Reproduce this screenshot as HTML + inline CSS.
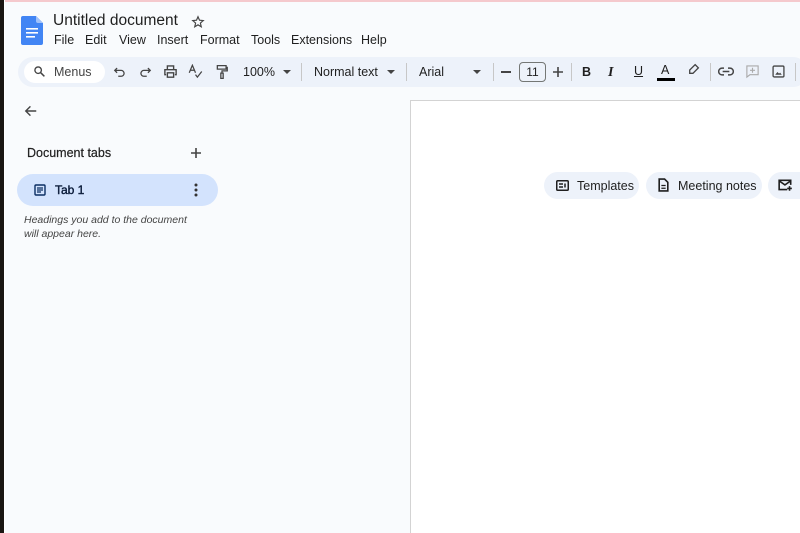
<!DOCTYPE html>
<html><head><meta charset="utf-8"><style>
*{margin:0;padding:0;box-sizing:border-box}
html{width:800px;height:533px;overflow:hidden}
body{width:800px;height:533px;overflow:hidden;background:#f9fbfd;font-family:"Liberation Sans",Arial,sans-serif;color:#1f1f1f;position:relative}
.abs{position:absolute}
svg{display:block}
.menu span{position:absolute;top:33px;font-size:12.5px;color:#1f1f1f}
.tb{position:absolute;top:57px;left:18px;width:790px;height:30px;background:#edf2fa;border-radius:16px}
.ic{position:absolute;top:64px}
.sep{position:absolute;top:63px;width:1px;height:18px;background:#c7c7c7}
.t{position:absolute;font-size:12.5px;color:#1f1f1f}
.chip{position:absolute;top:172px;height:27px;background:#edf2fa;border-radius:14px;font-size:12.5px;color:#1f1f1f}
</style></head><body>
<div class="abs" style="left:0;top:0;width:4px;height:533px;background:#1a1612"></div>
<div class="abs" style="left:4px;top:0;width:1px;height:533px;background:#fff"></div>
<div class="abs" style="left:5px;top:0;width:795px;height:2px;background:#f5c9cd"></div>

<svg class="abs" style="left:21px;top:16px" width="22" height="29" viewBox="0 0 22 29"><path d="M2 0h13l7 7v20a2 2 0 0 1-2 2H2a2 2 0 0 1-2-2V2a2 2 0 0 1 2-2z" fill="#4285f4"/><path d="M15 0l7 7h-5a2 2 0 0 1-2-2z" fill="#a1c2fa"/><rect x="5" y="12" width="12" height="1.6" fill="#fff"/><rect x="5" y="16" width="12" height="1.6" fill="#fff"/><rect x="5" y="20" width="9" height="1.6" fill="#fff"/></svg>
<div class="t" style="left:53px;top:12px;font-size:15.5px">Untitled document</div>
<svg class="abs" style="left:191px;top:15px" width="14" height="14" viewBox="0 0 24 24"><path d="M12 3l2.6 6 6.4.6-4.9 4.3 1.5 6.3L12 16.9 6.4 20.2l1.5-6.3L3 9.6 9.4 9z" fill="none" stroke="#444" stroke-width="2"/></svg>
<div class="menu"><span style="left:54px">File</span><span style="left:85px">Edit</span><span style="left:119px">View</span><span style="left:157px">Insert</span><span style="left:200px">Format</span><span style="left:251px">Tools</span><span style="left:291px">Extensions</span><span style="left:361px">Help</span></div>

<div class="tb"></div>
<div class="abs" style="left:24px;top:61px;width:81px;height:22px;background:#fff;border-radius:11px"></div>
<svg class="abs" style="left:33px;top:65px" width="13" height="13" viewBox="0 0 24 24"><circle cx="9.5" cy="9.5" r="6" fill="none" stroke="#444" stroke-width="2.5"/><path d="M14 14l7 7" stroke="#444" stroke-width="2.8"/></svg>
<div class="t" style="left:54px;top:65px;color:#444">Menus</div>
<svg class="ic" style="left:113px" width="14" height="14" viewBox="0 0 24 24"><path d="M7 7l-4 4 4 4M3 11h11a5 5 0 0 1 0 10H9" fill="none" stroke="#444" stroke-width="2.2"/></svg>
<svg class="ic" style="left:138px" width="14" height="14" viewBox="0 0 24 24"><path d="M17 7l4 4-4 4M21 11H10a5 5 0 0 0 0 10h5" fill="none" stroke="#444" stroke-width="2.2"/></svg>
<svg class="ic" style="left:163px" width="15" height="15" viewBox="0 0 24 24"><path d="M7 8V3h10v5M5 17H3v-8h18v8h-2M7 14h10v7H7z" fill="none" stroke="#444" stroke-width="2.2"/></svg>
<svg class="ic" style="left:188px" width="15" height="15" viewBox="0 0 24 24"><path d="M2 14L7 2l5 12M4 10h6M12 17l3 4 7-9" fill="none" stroke="#444" stroke-width="2"/></svg>
<svg class="ic" style="left:215px" width="14" height="16" viewBox="0 0 24 26"><path d="M4 2h15v6H4zM19 5h2v6h-9v4M10 15h4v9h-4z" fill="none" stroke="#444" stroke-width="2.2"/></svg>
<div class="t" style="left:243px;top:65px">100%</div>
<svg class="abs" style="left:283px;top:70px" width="8" height="5"><path d="M0 0h8L4 4z" fill="#444"/></svg>
<div class="sep" style="left:301px"></div>
<div class="t" style="left:314px;top:65px">Normal text</div>
<svg class="abs" style="left:387px;top:70px" width="8" height="5"><path d="M0 0h8L4 4z" fill="#444"/></svg>
<div class="sep" style="left:406px"></div>
<div class="t" style="left:419px;top:65px">Arial</div>
<svg class="abs" style="left:473px;top:70px" width="8" height="5"><path d="M0 0h8L4 4z" fill="#444"/></svg>
<div class="sep" style="left:493px"></div>
<div class="abs" style="left:501px;top:71px;width:10px;height:1.6px;background:#444"></div>
<div class="abs" style="left:519px;top:62px;width:27px;height:20px;border:1px solid #747775;border-radius:4px;font-size:12px;text-align:center;line-height:18px">11</div>
<svg class="abs" style="left:553px;top:67px" width="10" height="10"><path d="M5 0v10M0 5h10" stroke="#444" stroke-width="1.6"/></svg>
<div class="sep" style="left:571px"></div>
<div class="t" style="left:582px;top:65px;font-weight:bold">B</div>
<div class="t" style="left:608px;top:65px;font-style:italic;font-family:'Liberation Serif',serif;font-size:14px;font-weight:bold">I</div>
<div class="t" style="left:634px;top:64px;text-decoration:underline">U</div>
<div class="t" style="left:661px;top:63px">A</div>
<div class="abs" style="left:657px;top:78px;width:18px;height:3px;background:#000"></div>
<svg class="ic" style="left:687px;top:63px" width="13" height="13" viewBox="0 0 24 24"><path d="M15 3l6 6-10 10H5v-6z" fill="none" stroke="#444" stroke-width="2.4"/></svg>
<div class="sep" style="left:710px"></div>
<svg class="ic" style="left:718px;top:66px" width="16" height="11" viewBox="0 0 24 14"><path d="M9 2H6a5 5 0 0 0 0 10h3M15 2h3a5 5 0 0 1 0 10h-3M7 7h10" fill="none" stroke="#444" stroke-width="2.2"/></svg>
<svg class="ic" style="left:745px;top:64px" width="15" height="15" viewBox="0 0 24 24"><path d="M3 3h18v14H8l-5 4z M12 6v8M8 10h8" fill="none" stroke="#aaa" stroke-width="1.8"/></svg>
<svg class="ic" style="left:772px;top:65px" width="13" height="13" viewBox="0 0 24 24"><rect x="2" y="2" width="20" height="20" rx="2" fill="none" stroke="#444" stroke-width="2.4"/><path d="M6 18l4-5 3 3 2-2 3 4z" fill="#444"/></svg>
<div class="sep" style="left:795px"></div>

<svg class="abs" style="left:24px;top:104px" width="14" height="14" viewBox="0 0 24 24"><path d="M21 12H4M11 4l-8 8 8 8" fill="none" stroke="#444" stroke-width="2.4"/></svg>
<div class="t" style="left:27px;top:146px;font-size:12.5px;color:#222;-webkit-text-stroke:0.2px #222">Document tabs</div>
<svg class="abs" style="left:191px;top:148px" width="10" height="10"><path d="M5 0v10M0 5h10" stroke="#444" stroke-width="1.6"/></svg>
<div class="abs" style="left:17px;top:174px;width:201px;height:32px;background:#d3e3fd;border-radius:16px"></div>
<svg class="abs" style="left:34px;top:184px" width="12" height="12" viewBox="0 0 24 24"><rect x="2" y="2" width="20" height="20" rx="2" fill="none" stroke="#0b2e63" stroke-width="2.8"/><path d="M6 8h12M6 12h12M6 16h8" stroke="#0b2e63" stroke-width="2.4"/></svg>
<div class="t" style="left:55px;top:183px;color:#0b1c3a;font-size:12px;-webkit-text-stroke:0.4px #0b1c3a">Tab 1</div>
<svg class="abs" style="left:194px;top:183px" width="4" height="14"><circle cx="2" cy="2" r="1.5" fill="#333"/><circle cx="2" cy="7" r="1.5" fill="#333"/><circle cx="2" cy="12" r="1.5" fill="#333"/></svg>
<div class="t" style="left:24px;top:213px;font-size:10.5px;font-style:italic;color:#444;line-height:14px">Headings you add to the document<br>will appear here.</div>

<div class="abs" style="left:410px;top:100px;width:400px;height:440px;background:#fff;border:1px solid #d3d3d3"></div>
<div class="chip" style="left:544px;width:95px"></div>
<svg class="abs" style="left:556px;top:180px" width="13" height="11" viewBox="0 0 26 22"><rect x="1.5" y="1.5" width="23" height="19" rx="2" fill="none" stroke="#1f1f1f" stroke-width="3"/><path d="M6 8h8M6 14h8M18 7v8" stroke="#1f1f1f" stroke-width="3"/></svg>
<div class="t" style="left:577px;top:179px">Templates</div>
<div class="chip" style="left:646px;width:116px"></div>
<svg class="abs" style="left:658px;top:178px" width="11" height="14" viewBox="0 0 20 26"><path d="M2 2h10l6 6v16H2z" fill="none" stroke="#1f1f1f" stroke-width="3"/><path d="M6 14h8M6 19h8" stroke="#1f1f1f" stroke-width="2.4"/></svg>
<div class="t" style="left:678px;top:179px">Meeting notes</div>
<div class="chip" style="left:768px;width:60px"></div>
<svg class="abs" style="left:778px;top:179px" width="15" height="13" viewBox="0 0 26 22"><path d="M16 18H2V2h20v8M2 3l10 7 10-7M20 12v8M16 16h8" fill="none" stroke="#1f1f1f" stroke-width="2.8"/></svg>
</body></html>
